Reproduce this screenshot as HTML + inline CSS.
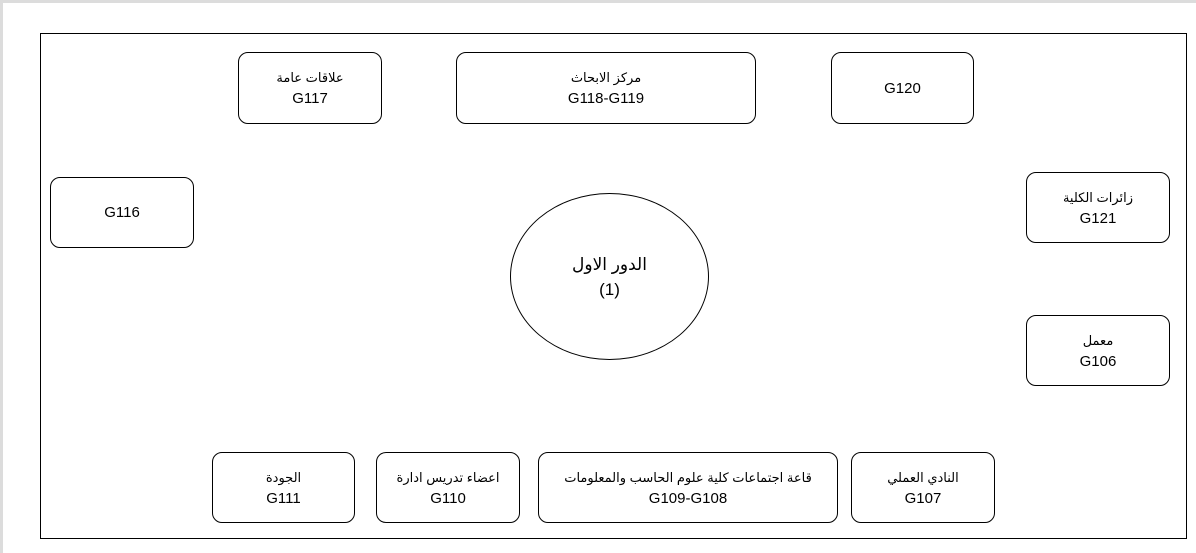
<!DOCTYPE html>
<html><head><meta charset="utf-8"><style>
body{margin:0;width:1196px;height:553px;background:#dcdcdc;position:relative;overflow:hidden;font-family:"Liberation Sans","DejaVu Sans",sans-serif;}
.page{position:absolute;left:3px;top:3px;right:0;bottom:0;background:#fff;}
.outer{position:absolute;left:40px;top:33px;width:1147px;height:506px;border:1px solid #000;box-sizing:border-box;}
.b{position:absolute;border:1px solid #000;border-radius:10px;box-sizing:border-box;display:flex;flex-direction:column;justify-content:center;align-items:center;font-size:15px;color:#000;line-height:21px;}
.b .a{font-size:13px;}
.e{position:absolute;left:510px;top:193px;width:199px;height:167px;border:1px solid #000;border-radius:50%;box-sizing:border-box;display:flex;flex-direction:column;justify-content:center;align-items:center;font-size:17px;line-height:25px;}
</style></head><body>
<div class="page"></div>
<div class="outer"></div>
<div class="b" style="left:238px;top:52px;width:144px;height:72px"><div class="a">علاقات عامة</div><div>G117</div></div>
<div class="b" style="left:456px;top:52px;width:300px;height:72px"><div class="a">مركز الابحاث</div><div>G118-G119</div></div>
<div class="b" style="left:831px;top:52px;width:143px;height:72px"><div>G120</div></div>
<div class="b" style="left:50px;top:177px;width:144px;height:71px"><div>G116</div></div>
<div class="b" style="left:1026px;top:172px;width:144px;height:71px"><div class="a">زائرات الكلية</div><div>G121</div></div>
<div class="b" style="left:1026px;top:315px;width:144px;height:71px"><div class="a">معمل</div><div>G106</div></div>
<div class="b" style="left:212px;top:452px;width:143px;height:71px"><div class="a">الجودة</div><div>G111</div></div>
<div class="b" style="left:376px;top:452px;width:144px;height:71px"><div class="a">اعضاء تدريس ادارة</div><div>G110</div></div>
<div class="b" style="left:538px;top:452px;width:300px;height:71px"><div class="a">قاعة اجتماعات كلية علوم الحاسب والمعلومات</div><div>G109-G108</div></div>
<div class="b" style="left:851px;top:452px;width:144px;height:71px"><div class="a">النادي العملي</div><div>G107</div></div>
<div class="e"><div>الدور الاول</div><div>(1)</div></div>
</body></html>
